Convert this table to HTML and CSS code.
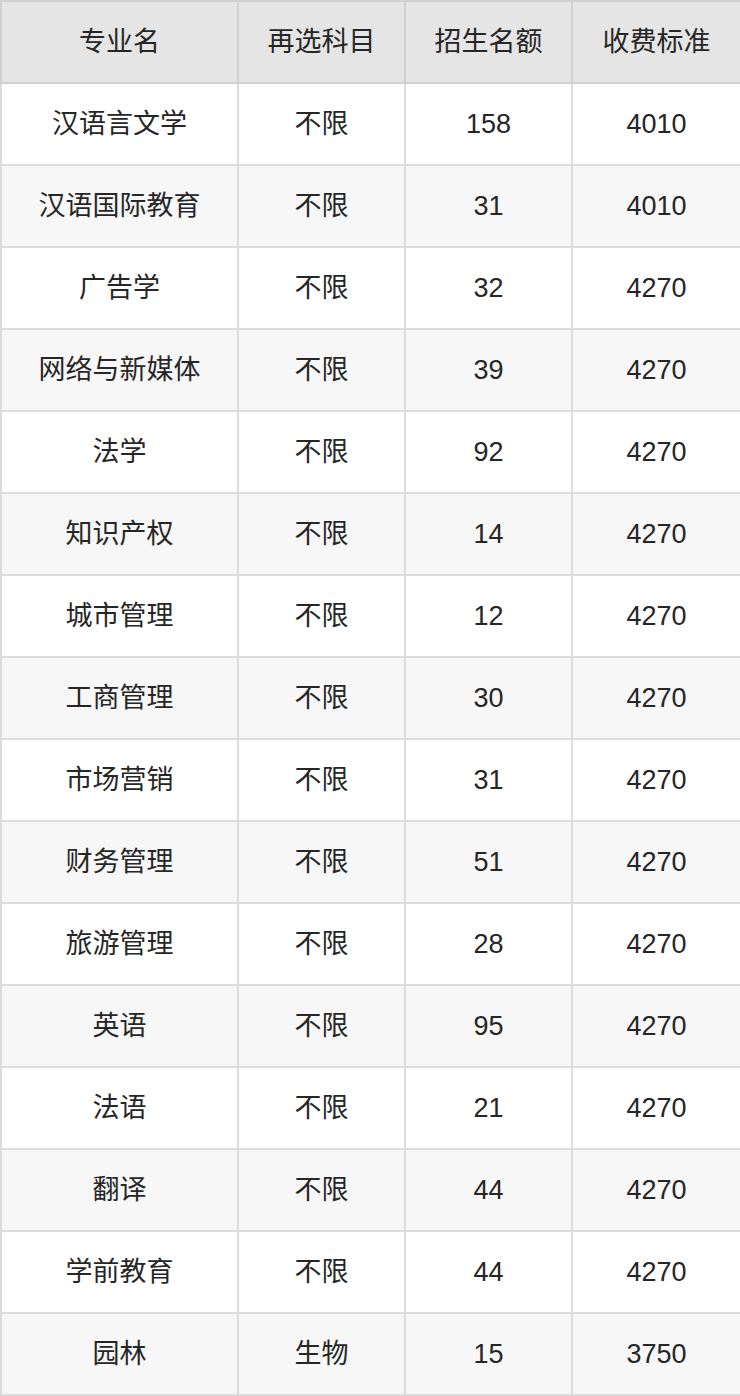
FILE: index.html
```html
<!DOCTYPE html>
<html lang="zh">
<head>
<meta charset="utf-8">
<link rel="stylesheet" href="styles.css">
</head>
<body>
<table class="tbl">
  <colgroup>
    <col class="c1"><col class="c2"><col class="c3"><col class="c4">
  </colgroup>
  <thead>
    <tr><th>专业名</th><th>再选科目</th><th>招生名额</th><th>收费标准</th></tr>
  </thead>
  <tbody>
    <tr><td>汉语言文学</td><td>不限</td><td>158</td><td>4010</td></tr>
    <tr><td>汉语国际教育</td><td>不限</td><td>31</td><td>4010</td></tr>
    <tr><td>广告学</td><td>不限</td><td>32</td><td>4270</td></tr>
    <tr><td>网络与新媒体</td><td>不限</td><td>39</td><td>4270</td></tr>
    <tr><td>法学</td><td>不限</td><td>92</td><td>4270</td></tr>
    <tr><td>知识产权</td><td>不限</td><td>14</td><td>4270</td></tr>
    <tr><td>城市管理</td><td>不限</td><td>12</td><td>4270</td></tr>
    <tr><td>工商管理</td><td>不限</td><td>30</td><td>4270</td></tr>
    <tr><td>市场营销</td><td>不限</td><td>31</td><td>4270</td></tr>
    <tr><td>财务管理</td><td>不限</td><td>51</td><td>4270</td></tr>
    <tr><td>旅游管理</td><td>不限</td><td>28</td><td>4270</td></tr>
    <tr><td>英语</td><td>不限</td><td>95</td><td>4270</td></tr>
    <tr><td>法语</td><td>不限</td><td>21</td><td>4270</td></tr>
    <tr><td>翻译</td><td>不限</td><td>44</td><td>4270</td></tr>
    <tr><td>学前教育</td><td>不限</td><td>44</td><td>4270</td></tr>
    <tr><td>园林</td><td>生物</td><td>15</td><td>3750</td></tr>
  </tbody>
</table>
</body>
</html>
```

FILE: styles.css
```css
html, body {
  margin: 0;
  padding: 0;
  background: #ffffff;
}
.tbl {
  width: 740px;
  border-collapse: collapse;
  table-layout: fixed;
  font-family: "Liberation Sans", "Noto Sans CJK SC", sans-serif;
  font-size: 27px;
  color: #262626;
}
.c1 { width: 237px; }
.c2 { width: 167px; }
.c3 { width: 167px; }
.c4 { width: 169px; }
.tbl th, .tbl td {
  height: 80px;
  padding: 0;
  text-align: center;
  vertical-align: middle;
  border: 2px solid #dcdcdc;
  box-sizing: content-box;
  line-height: 1;
}
.tbl th {
  font-weight: normal;
  background: #e5e5e5;
  border-color: #d0d0d0;
}
.tbl tbody tr:nth-child(even) td {
  background: #f7f7f7;
}
```
